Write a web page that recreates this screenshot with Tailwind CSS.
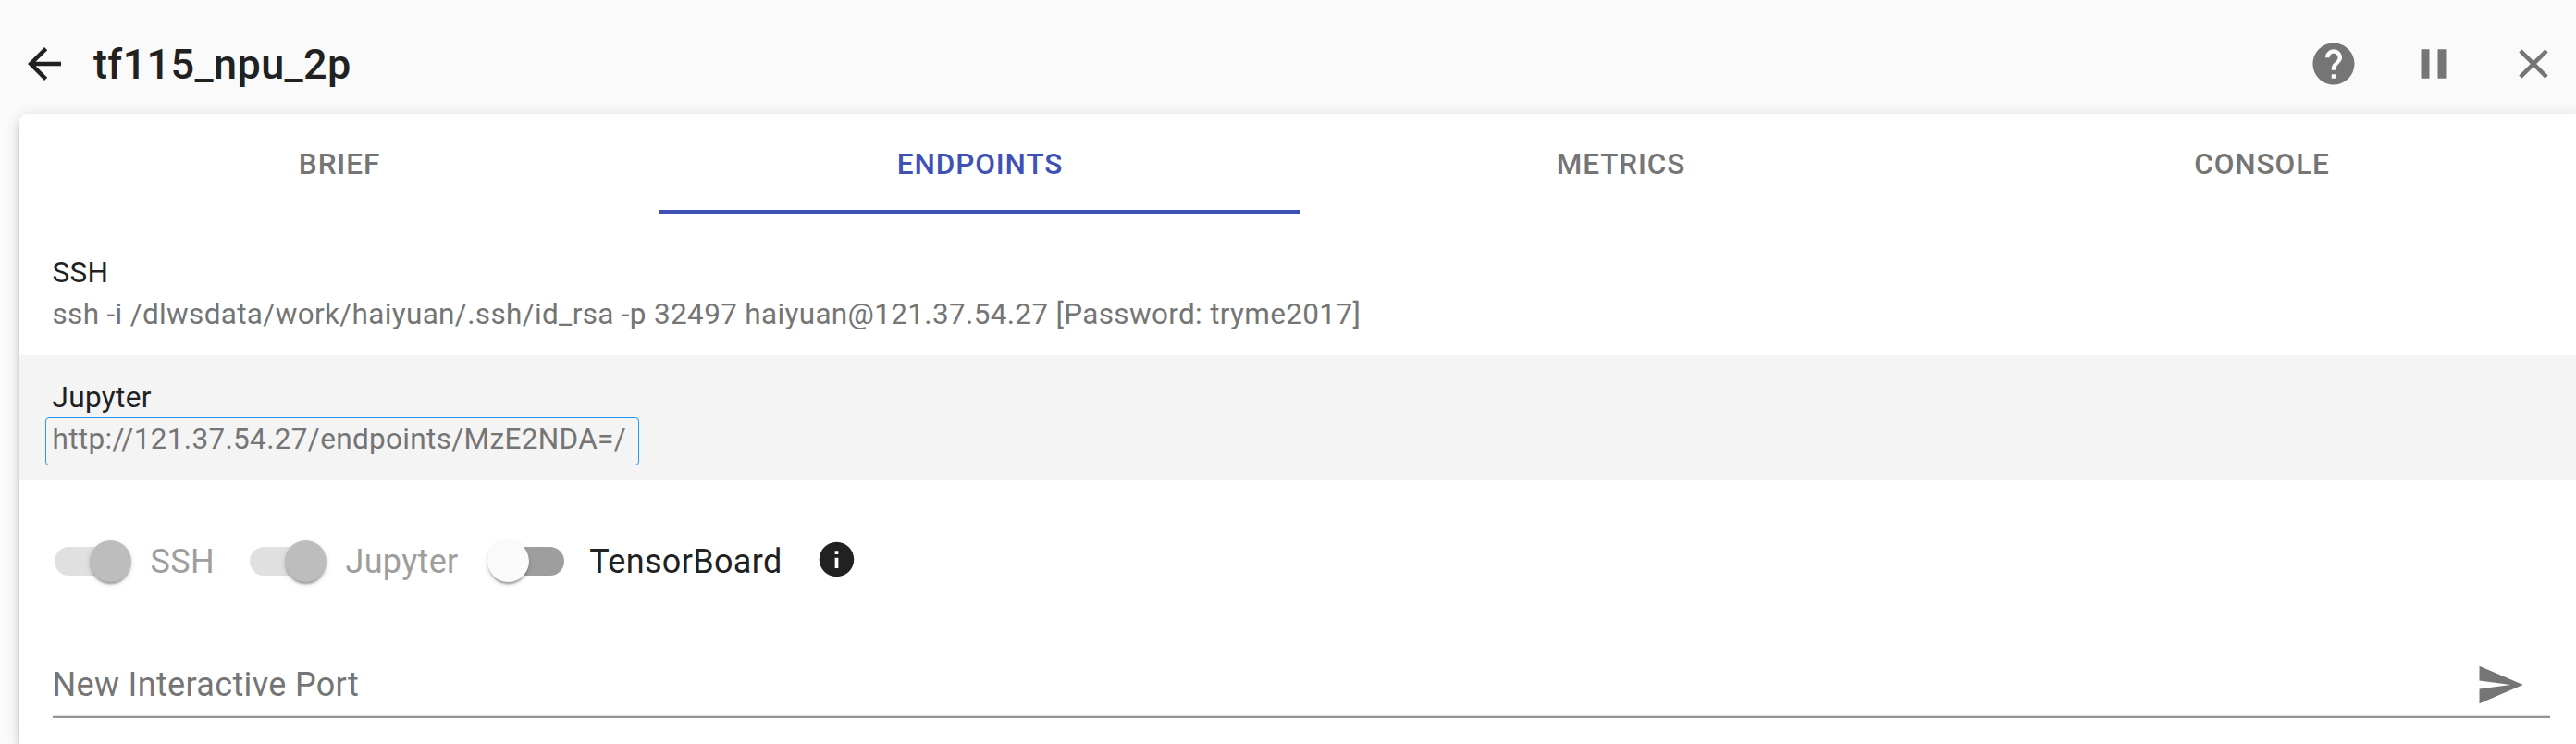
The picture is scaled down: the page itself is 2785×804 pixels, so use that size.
<!DOCTYPE html>
<html lang="en">
<head>
<meta charset="utf-8">
<title>tf115_npu_2p</title>
<script src="https://cdn.jsdelivr.net/npm/@tailwindcss/browser@4"></script>
</head>
<body class="w-[2785px] h-[804px] overflow-hidden bg-[#fafafa] font-[Roboto,sans-serif] text-[#212121]">
<div class="w-[2792.5px] h-[804px] flex flex-col">
  <header class="h-[123px] pt-[15px] pl-[21px] flex items-start shrink-0">
    <button class="h-[108px] flex items-center"><svg class="size-[54px]" viewBox="0 0 24 24" fill="#212121"><path d="M20 11H7.83l5.59-5.59L12 4l-8 8 8 8 1.41-1.41L7.83 13H20v-2z"/></svg></button>
    <h1 class="ml-[26px] h-[108px] pt-px leading-[108px] text-[45px] font-medium tracking-[0.0085em]">tf115_npu_2p</h1>
    <div class="ml-auto flex text-[#757575]">
      <button class="size-[108px] p-[27px]"><svg class="size-[54px]" viewBox="0 0 24 24" fill="currentColor"><path d="M12 2C6.48 2 2 6.48 2 12s4.48 10 10 10 10-4.48 10-10S17.52 2 12 2zm1 17h-2v-2h2v2zm2.07-7.75l-.9.92C13.45 12.9 13 13.5 13 15h-2v-.5c0-1.1.45-2.1 1.17-2.83l1.24-1.26c.37-.36.59-.86.59-1.41 0-1.1-.9-2-2-2s-2 .9-2 2H8c0-2.21 1.79-4 4-4s4 1.79 4 4c0 .88-.36 1.68-.93 2.25z"/></svg></button>
      <button class="size-[108px] p-[27px]"><svg class="size-[54px]" viewBox="0 0 24 24" fill="currentColor"><path d="M6 19h4V5H6v14zm8-14v14h4V5h-4z"/></svg></button>
      <button class="size-[108px] p-[27px]"><svg class="size-[54px]" viewBox="0 0 24 24" fill="currentColor"><path d="M19 6.41L17.59 5 12 10.59 6.41 5 5 6.41 10.59 12 5 17.59 6.41 19 12 13.41 17.59 19 19 17.59 13.41 12z"/></svg></button>
    </div>
  </header>
  <main class="ml-[21px] grow bg-white rounded-t-[9px] shadow-[0_7px_7px_-4.5px_rgba(0,0,0,0.2),0_7px_9px_0_rgba(0,0,0,0.14),0_2px_18px_0_rgba(0,0,0,0.12)]">
    <nav class="h-[108px] grid grid-cols-[692px_693px_693px_693px] text-center text-[31.5px] leading-[109px] font-medium tracking-[0.02857em] text-[#757575]">
      <div>BRIEF</div>
      <div class="h-[108px] text-[#3f51b5] shadow-[inset_0_-4px_0_#3f51b5]">ENDPOINTS</div>
      <div>METRICS</div>
      <div>CONSOLE</div>
    </nav>
    <ul class="pt-[18px] text-[31.5px] leading-[45px] tracking-[0.0105em]">
      <li class="h-[135px] pl-[35.5px] pt-[22.5px]">
        <p>SSH</p>
        <p class="text-[#757575]">ssh -i /dlwsdata/work/haiyuan/.ssh/id_rsa -p 32497 haiyuan@121.37.54.27 [Password: tryme2017]</p>
      </li>
      <li class="h-[135px] pl-[35.5px] pt-[22px] bg-[#f4f4f4]">
        <p class="leading-[47px] h-[45px]">Jupyter</p>
        <p class="-ml-[7.5px] w-[642px] h-[52px] pl-[6.5px] border border-[#2196f3] rounded-[4px] text-[#757575] leading-[46px]">http://121.37.54.27/endpoints/MzE2NDA=/</p>
      </li>
    </ul>
    <div class="mt-[45px] pl-[11px] h-[85px] flex items-center text-[36px] leading-[54px] tracking-[0.00938em]">
      <label class="flex items-center mr-[11px] text-[#9e9e9e]">
        <span class="w-[130.5px] px-[27px]"><span class="relative block w-[76.5px] h-[31.5px] rounded-full bg-[#e0e0e0]"><span class="absolute left-[38px] -top-[7px] size-[45px] rounded-full bg-[#bdbdbd] shadow-[0_4.5px_2.25px_-2.25px_rgba(0,0,0,0.2),0_2.25px_2.25px_0_rgba(0,0,0,0.14),0_2.25px_6.75px_0_rgba(0,0,0,0.12)]"></span></span></span>
        <span>SSH</span>
      </label>
      <label class="flex items-center mr-[11px] text-[#9e9e9e]">
        <span class="w-[130.5px] px-[27px]"><span class="relative block w-[76.5px] h-[31.5px] rounded-full bg-[#e0e0e0]"><span class="absolute left-[38px] -top-[7px] size-[45px] rounded-full bg-[#bdbdbd] shadow-[0_4.5px_2.25px_-2.25px_rgba(0,0,0,0.2),0_2.25px_2.25px_0_rgba(0,0,0,0.14),0_2.25px_6.75px_0_rgba(0,0,0,0.12)]"></span></span></span>
        <span>Jupyter</span>
      </label>
      <label class="flex items-center">
        <span class="w-[130.5px] px-[27px]"><span class="relative block w-[76.5px] h-[31.5px] rounded-full bg-[#9e9e9e]"><span class="absolute -left-[7px] -top-[7px] size-[45px] rounded-full bg-[#fafafa] shadow-[0_4.5px_2.25px_-2.25px_rgba(0,0,0,0.2),0_2.25px_2.25px_0_rgba(0,0,0,0.14),0_2.25px_6.75px_0_rgba(0,0,0,0.12)]"></span></span></span>
        <span>TensorBoard</span>
      </label>
      <svg class="ml-9 mb-1 size-[45px]" viewBox="0 0 24 24" fill="#212121"><path d="M12 2C6.48 2 2 6.48 2 12s4.48 10 10 10 10-4.48 10-10S17.52 2 12 2zm1 15h-2v-6h2v6zm0-8h-2V7h2v2z"/></svg>
    </div>
    <div class="ml-9 mr-[35.5px] mt-[51px] h-[76px] flex items-center justify-between pr-[27px] pt-[5px] border-b-2 border-[#949494] shadow-[inset_0_-1px_0_#e0e0e0] text-[36px] tracking-[0.00938em] text-[#757575]">
      <span class="-ml-[0.5px]">New Interactive Port</span>
      <svg class="size-[54px]" viewBox="0 0 24 24" fill="currentColor"><path d="M2.01 21L23 12 2.01 3 2 10l15 2-15 2z"/></svg>
    </div>
  </main>
</div>
</body>
</html>
